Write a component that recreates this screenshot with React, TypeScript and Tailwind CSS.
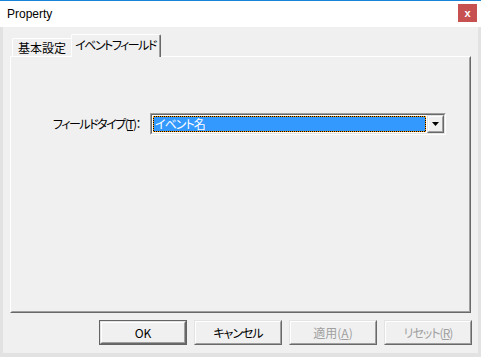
import React from "react";

const jp = "font-['Noto_Sans_CJK_JP','Noto_Sans',sans-serif] [font-feature-settings:'palt'] whitespace-nowrap";

function RaisedButton({
  children,
  isDefault,
  disabled,
  tight,
}: {
  children: React.ReactNode;
  isDefault?: boolean;
  disabled?: boolean;
  tight?: boolean;
}) {
  const inner = (
    <div className="flex-1 flex border border-t-[#e3e3e3] border-l-[#e3e3e3] border-r-[#696969] border-b-[#696969]">
      <div
        className={`flex-1 flex items-center justify-center border border-t-white border-l-white border-r-[#a0a0a0] border-b-[#a0a0a0] bg-[#f0f0f0] text-[12px] leading-none ${
          disabled ? "text-[#a0a0a0]" : "text-black"
        } ${tight ? "tracking-[-1px]" : ""}`}
      >
        {children}
      </div>
    </div>
  );
  return (
    <div
      className={`w-[88px] h-[25px] flex ${jp} ${
        isDefault ? "border border-[#646464]" : ""
      }`}
    >
      {inner}
    </div>
  );
}

export default function App() {
  return (
    <div className="w-[481px] h-[357px] bg-[#e2e2e2] flex flex-col overflow-hidden">
      {/* top accent line */}
      <div className="h-px bg-[#1883d7]" />
      {/* title bar */}
      <div className="h-[26px] bg-white flex items-start">
        <div className="pl-[7px] pt-[6px] text-[12px] leading-[14px] text-black font-['Liberation_Sans',sans-serif]">
          Property
        </div>
        <div className="ml-auto mr-[4px] mt-[3px] w-[19px] h-[18px] bg-[#c75050] flex items-center justify-center text-white font-bold text-[11px] leading-none font-['Liberation_Sans',sans-serif]">
          x
        </div>
      </div>
      {/* body */}
      <div className="mx-[3px] h-[326px] bg-[#f0f0f0] flex flex-col pt-[7px] px-[7px]">
        {/* tabs */}
        <div className={`h-[22px] flex items-end pl-[2px] ${jp} text-[12px] text-black`}>
          <div className="h-[18px] w-[59px] flex items-start justify-center pt-[2px] leading-[14px] border-l border-t border-l-white border-t-white rounded-tl-[2px] bg-[#f0f0f0]">
            基本設定
          </div>
          <div className="relative z-10 -mb-px h-[23px] w-[90px] flex border-l border-t border-l-white border-t-white border-r border-r-[#696969] rounded-t-[2px] bg-[#f0f0f0]">
            <div className="flex-1 flex justify-center pt-[3px] leading-[14px] border-r border-r-[#a0a0a0] tracking-[-1.5px]">
              イベントフィールド
            </div>
          </div>
        </div>
        {/* panel */}
        <div className="h-[257px] flex border border-t-white border-l-white border-r-[#696969] border-b-[#696969]">
          <div className="flex-1 flex flex-col border border-t-[#f0f0f0] border-l-[#f0f0f0] border-r-[#a0a0a0] border-b-[#a0a0a0]">
            <div className={`mt-[55px] flex items-center pl-[41px] ${jp} text-[12px] text-black`}>
              <div className="w-[97px] leading-[14px] tracking-[-1.5px]">
                フィールドタイプ(<span className="underline">T</span>)：
              </div>
              {/* combobox */}
              <div className="w-[296px] h-[22px] flex border border-t-[#a0a0a0] border-l-[#a0a0a0] border-r-white border-b-white">
                <div className="flex-1 flex border border-t-[#696969] border-l-[#696969] border-r-[#e3e3e3] border-b-[#e3e3e3] bg-white">
                  <div className="flex-1 p-px">
                    <div className="h-full bg-black">
                      <div className="h-full border border-dotted border-[#ff9a00] bg-[#3399ff] bg-clip-padding text-white leading-[14px] pl-px tracking-[-1px]">
                        イベント名
                      </div>
                    </div>
                  </div>
                  <div className="w-[17px] flex border border-t-[#e3e3e3] border-l-[#e3e3e3] border-r-[#696969] border-b-[#696969]">
                    <div className="flex-1 flex items-center justify-center border border-t-white border-l-white border-r-[#a0a0a0] border-b-[#a0a0a0] bg-[#f0f0f0]">
                      <svg width="7" height="4" viewBox="0 0 7 4">
                        <path d="M0 0H7L3.5 4Z" fill="#000" />
                      </svg>
                    </div>
                  </div>
                </div>
              </div>
            </div>
          </div>
        </div>
        {/* buttons */}
        <div className="mt-[7px] flex justify-end gap-[7px] mr-[-1px]">
          <RaisedButton isDefault>OK</RaisedButton>
          <RaisedButton tight>キャンセル</RaisedButton>
          <RaisedButton disabled>
            適用(<span className="underline">A</span>)
          </RaisedButton>
          <RaisedButton disabled tight>
            リセット(<span className="underline">R</span>)
          </RaisedButton>
        </div>
      </div>
    </div>
  );
}
